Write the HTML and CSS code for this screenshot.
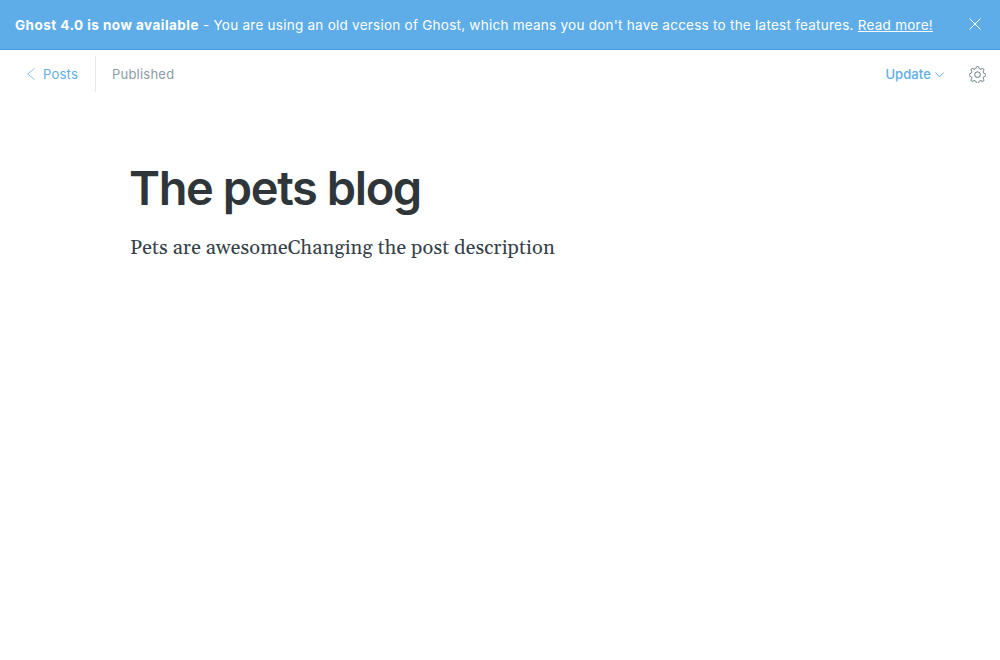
FILE: index.html
```html
<!DOCTYPE html>
<html lang="en">
<head>
<meta charset="utf-8">
<title>The pets blog</title>
<link rel="stylesheet" href="styles.css">
</head>
<body>
<aside class="alert">
  <div class="alert-text"><b>Ghost 4.0 is now available</b> - You are using an old version of Ghost, which means you don't have access to the latest features. <a href="#">Read more!</a></div>
  <svg class="close" width="12" height="12" viewBox="0 0 12 12"><path d="M.5.5l11 11M11.5.5l-11 11"/></svg>
</aside>
<header class="bar">
  <a class="back" href="#"><svg width="8" height="12" viewBox="0 0 8 12"><path d="M7.500.5L.7 6l6.800 5.500"/></svg><span>Posts</span></a>
  <span class="status">Published</span>
  <a class="update" href="#"><span>Update</span><svg width="9" height="6" viewBox="0 0 9 6"><path d="M.5.5l4 4.500 4-4.500"/></svg></a>
  <svg class="gear" width="17" height="17" viewBox="0 0 24 24"><path d="M9.700 3.300 10.500 1.500a1.650 1.650 0 0 1 3 0l.8 1.800a2 2 0 0 0 2.600 1.100l1.900-.7a1.650 1.650 0 0 1 2.100 2.100l-.7 1.900a2 2 0 0 0 1.100 2.600l1.800.8a1.650 1.650 0 0 1 0 3l-1.800.8a2 2 0 0 0-1.100 2.600l.7 1.900a1.650 1.650 0 0 1-2.100 2.100l-1.900-.7a2 2 0 0 0-2.600 1.100l-.8 1.700a1.650 1.650 0 0 1-3 0l-.8-1.700a2 2 0 0 0-2.600-1.100l-1.900.7a1.650 1.650 0 0 1-2.100-2.100l.7-1.900a2 2 0 0 0-1.100-2.600l-1.800-.8a1.650 1.650 0 0 1 0-3l1.800-.8a2 2 0 0 0 1.100-2.600l-.7-1.900a1.650 1.650 0 0 1 2.100-2.100l1.900.7a2 2 0 0 0 2.600-1.100z"/><circle cx="12" cy="12.200" r="4"/></svg>
</header>
<main class="editor">
  <h1>The pets blog</h1>
  <p>Pets are awesomeChanging the post description</p>
</main>
</body>
</html>
```
FILE: styles.css
```css
* { box-sizing: border-box; }
body { margin: 0; background: #fff; font-family: Inter, sans-serif; color: #2e3639; }
a { color: inherit; }
svg { fill: none; stroke: currentColor; flex: none; }
.alert { height: 50px; display: flex; align-items: center; justify-content: space-between; padding: 0 19px 2px 15px; background: #5eade9; border-bottom: 1px solid #4698dc; color: #fff; font-size: 13.5px; white-space: nowrap; }
.alert-text { letter-spacing: .25px; padding-top: 3px; }
.alert b { font-weight: 650; letter-spacing: .46px; }
.bar { height: 48px; display: flex; align-items: center; padding: 0 14px 0 27px; font-size: 13px; letter-spacing: .22px; }
.back { display: flex; align-items: center; gap: 8px; width: 69px; height: 36px; border-right: 1px solid #e5e9ed; color: #5eade9; text-decoration: none; }
.back svg { opacity: .75; }
.status { margin-left: 16px; color: #8b9ca6; }
.update { margin-left: auto; display: flex; align-items: center; gap: 4px; color: #5eade9; font-weight: 500; letter-spacing: .1px; text-decoration: none; }
.update svg { margin-top: 2px; }
.gear { margin-left: 25px; color: #607580; stroke-width: 1.400; }
.editor { padding: 61px 130px 0; }
h1 { margin: 0 0 0 -1px; font-size: 47px; line-height: 58px; font-weight: 600; letter-spacing: -1.4px; }
p { margin: 16px 0 0; font-family: Gelasio, Georgia, "Liberation Serif", serif; font-size: 20px; line-height: 30px; letter-spacing: .09px; color: #36414a; }
```
